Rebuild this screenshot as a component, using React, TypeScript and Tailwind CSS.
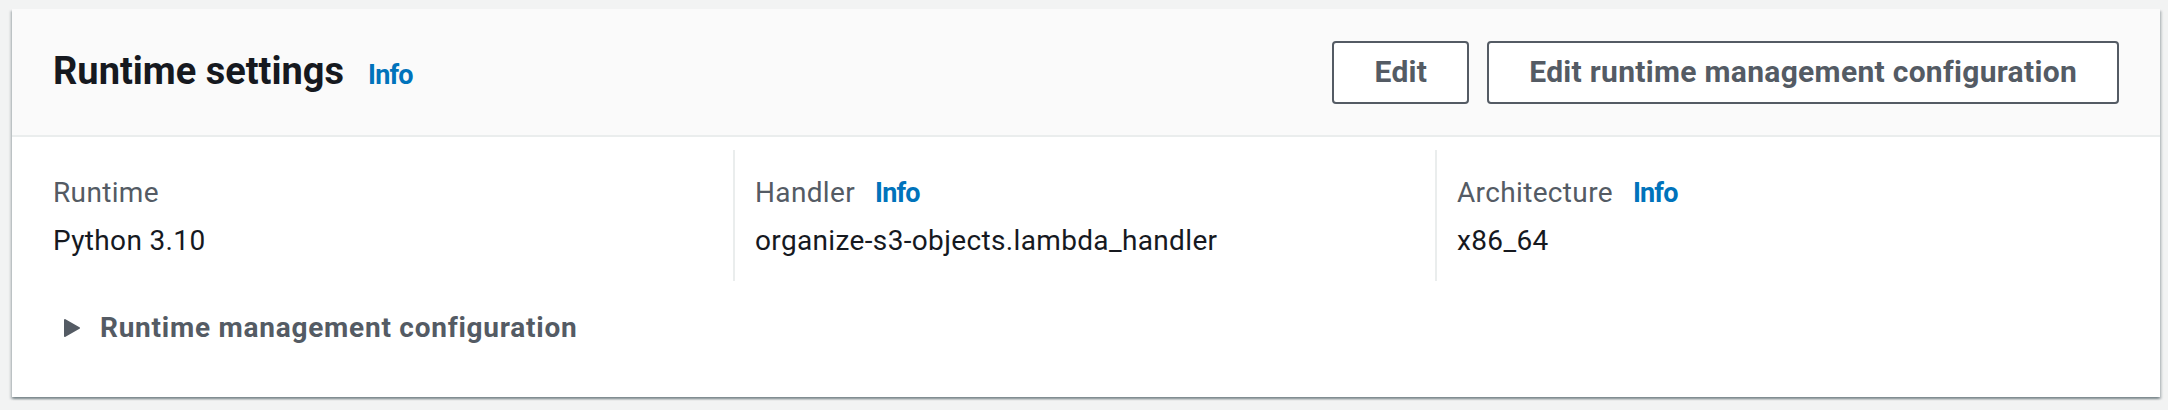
import React from "react";

const font = { fontFamily: "Roboto, 'Open Sans', Arial, sans-serif" };

function InfoLink({ className = "" }: { className?: string }) {
  return (
    <span className={`text-[27px] leading-[40px] font-bold tracking-[-0.8px] text-[#0073bb] ${className}`}>Info</span>
  );
}

function Column({
  label,
  value,
  info,
  first,
}: {
  label: string;
  value: string;
  info?: boolean;
  first?: boolean;
}) {
  return (
    <div
      className={`border-l-2 ${first ? "border-transparent" : "border-[#eaeded]"} pl-[20px] pt-[23px] pb-[20px]`}
    >
      <div className="flex items-center text-[28px] leading-[40px] tracking-[0.35px] text-[#545b64] mb-[8px]">
        <span>{label}</span>
        {info && <InfoLink className="ml-[20px]" />}
      </div>
      <div className="text-[28px] leading-[40px] tracking-[0.35px] text-[#16191f]">{value}</div>
    </div>
  );
}

export default function App() {
  return (
    <div className="w-full h-[410px] bg-[#f2f3f3] pt-[9px] pl-[12px] pr-[8px]" style={font}>
      <div className="bg-white shadow-[0_2px_2px_0_rgba(0,28,36,0.3),2px_2px_2px_0_rgba(0,28,36,0.15),-2px_2px_2px_0_rgba(0,28,36,0.15)]">
        <div className="h-[128px] bg-[#fafafa] border-b-2 border-[#eaeded] px-[41px] flex items-center justify-between">
          <div className="flex items-baseline">
            <h2 className="text-[38px] leading-[44px] font-bold text-[#16191f]">Runtime settings</h2>
            <InfoLink className="ml-[24px]" />
          </div>
          <div className="flex items-center gap-[18px]">
            <button className="h-[63px] px-[40px] border-2 border-[#545b64] rounded-[4px] bg-white text-[30px] leading-[40px] font-bold tracking-[0.3px] text-[#545b64]">
              Edit
            </button>
            <button className="h-[63px] px-[40px] border-2 border-[#545b64] rounded-[4px] bg-white text-[30px] leading-[40px] font-bold tracking-[0.3px] text-[#545b64]">
              Edit runtime management configuration
            </button>
          </div>
        </div>
        <div className="pt-[13px] pl-[19px] pr-[23px]">
          <div className="grid grid-cols-3">
            <Column first label="Runtime" value="Python 3.10" />
            <Column label="Handler" info value="organize-s3-objects.lambda_handler" />
            <Column label="Architecture" info value="x86_64" />
          </div>
        </div>
        <div className="flex items-center pl-[51px] pt-[27px] pb-[49px]">
          <svg width="18" height="20" viewBox="0 0 18 20" className="mr-[19px]">
            <path d="M2 2 L16 10 L2 18 Z" fill="#545b64" stroke="#545b64" strokeWidth="2" strokeLinejoin="round" />
          </svg>
          <span className="text-[28px] leading-[40px] font-bold tracking-[0.75px] text-[#545b64]">
            Runtime management configuration
          </span>
        </div>
      </div>
    </div>
  );
}
